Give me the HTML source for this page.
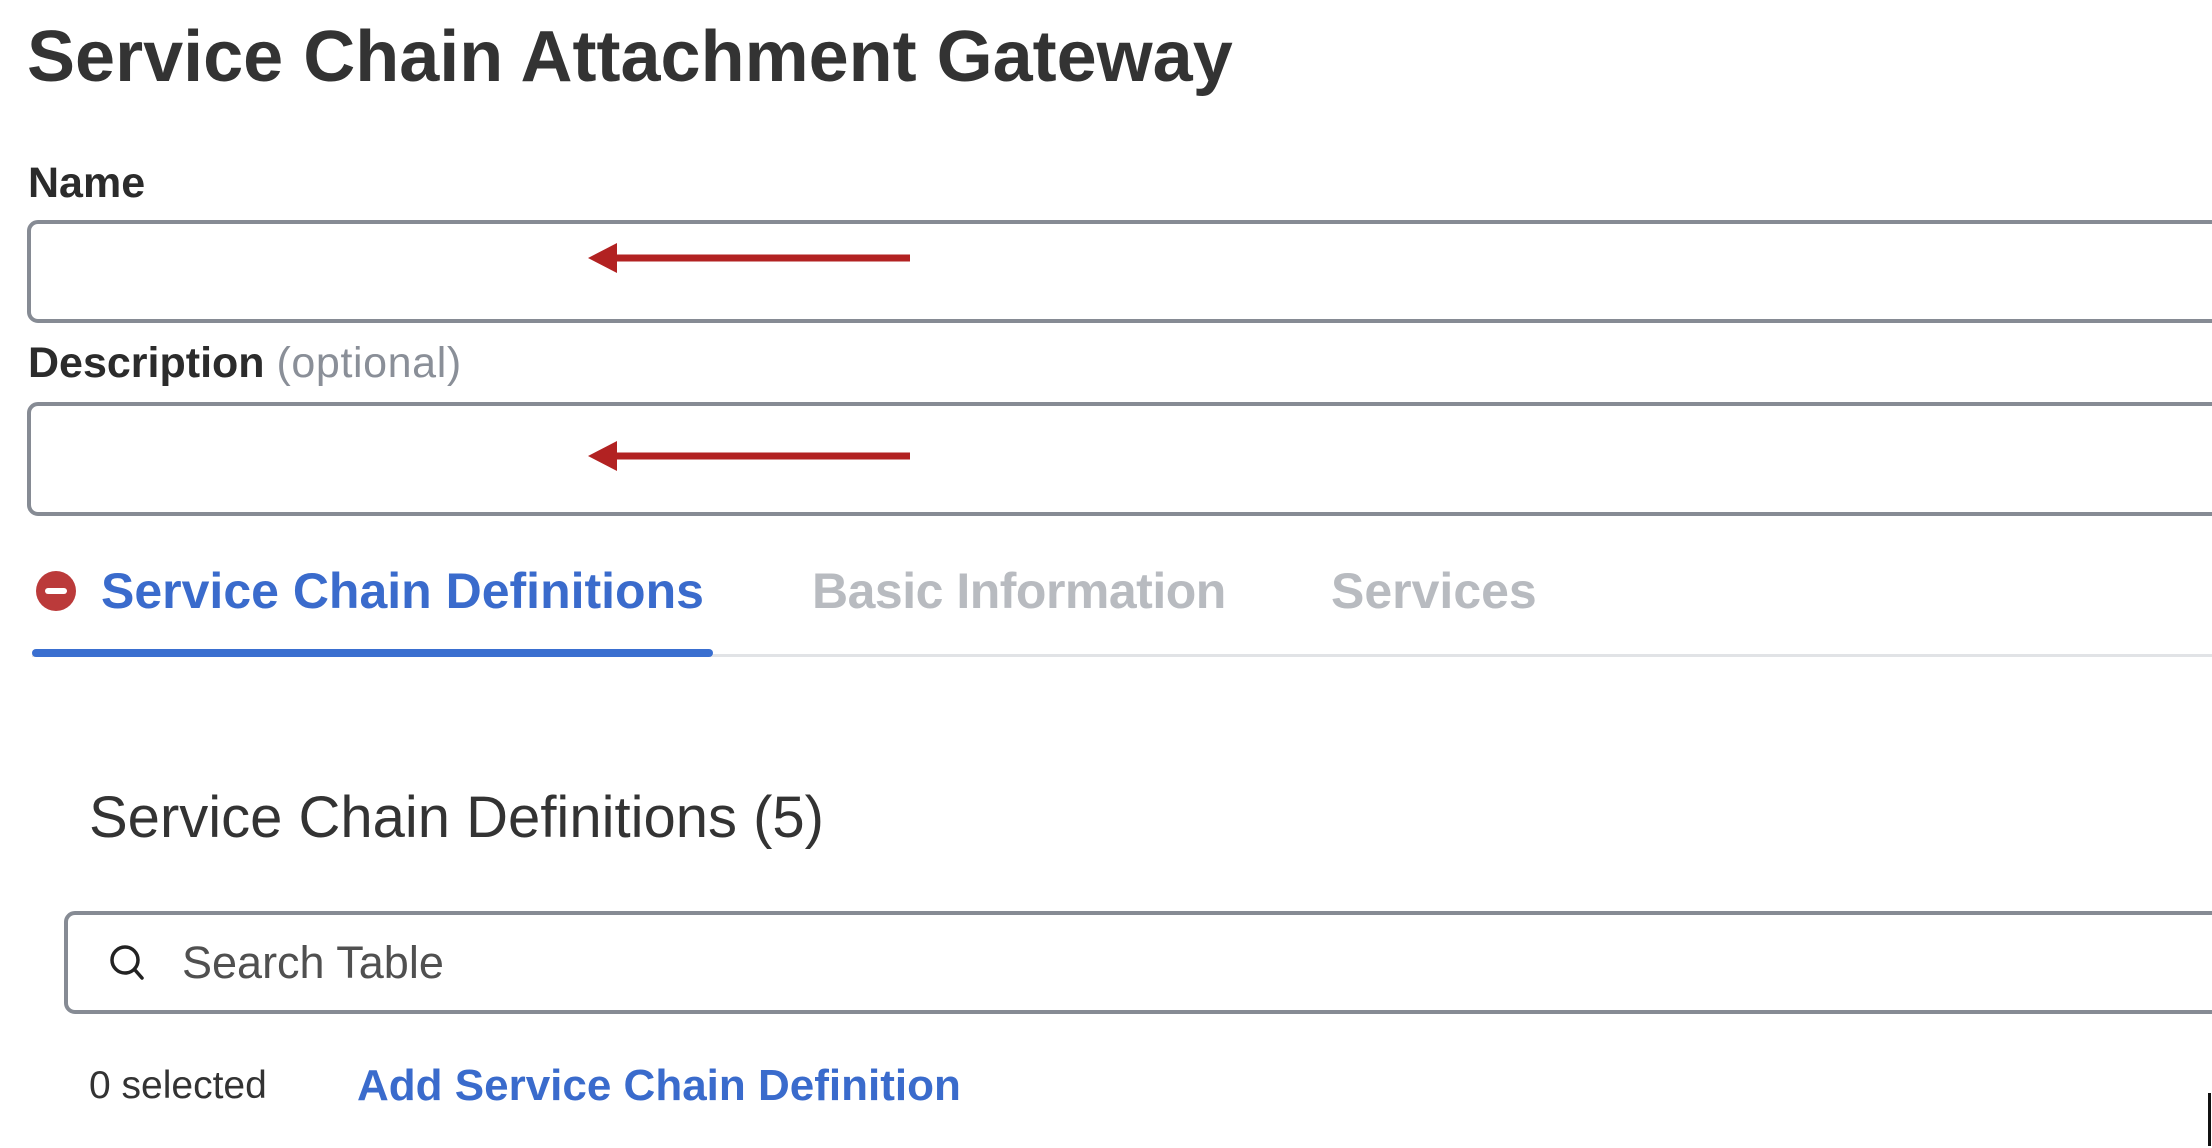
<!DOCTYPE html>
<html><head><meta charset="utf-8"><style>
html,body{margin:0;padding:0;background:#fff;width:2212px;height:1148px;overflow:hidden;position:relative;font-family:"Liberation Sans",Arial,sans-serif}
.a{position:absolute;white-space:nowrap;line-height:1}
.box{position:absolute;border:4px solid #868b94;border-radius:11px;box-sizing:border-box;background:#fff}
</style></head><body>
<div class="a" style="left:27px;top:21px;font-size:72px;font-weight:bold;color:#333">Service Chain Attachment Gateway</div>
<div class="a" style="left:28px;top:162px;font-size:43px;font-weight:bold;color:#2b2b2b">Name</div>
<div class="box" style="left:27px;top:220px;width:2220px;height:103px"></div>
<div class="a" style="left:28px;top:342px;font-size:43px;font-weight:bold;color:#2b2b2b">Description <span style="font-weight:normal;color:#8a8f98;letter-spacing:0.6px">(optional)</span></div>
<div class="box" style="left:27px;top:402px;width:2220px;height:114px"></div>
<svg class="a" style="left:585px;top:238px" width="330" height="40"><path d="M28 16.5H325v7H28z" fill="#b22222"/><path d="M3 20L32 5v30z" fill="#b22222"/></svg>
<svg class="a" style="left:585px;top:436px" width="330" height="40"><path d="M28 16.5H325v7H28z" fill="#b22222"/><path d="M3 20L32 5v30z" fill="#b22222"/></svg>
<svg class="a" style="left:36px;top:571px" width="40" height="40"><circle cx="20" cy="20" r="20" fill="#bb3a3a"/><rect x="9" y="17" width="22" height="6" rx="3" fill="#fff"/></svg>
<div class="a" style="left:101px;top:566px;font-size:50px;font-weight:bold;color:#3a6bcc">Service Chain Definitions</div>
<div class="a" style="left:812px;top:566px;font-size:50px;font-weight:bold;color:#b8bbc0;letter-spacing:-0.5px">Basic Information</div>
<div class="a" style="left:1331px;top:566px;font-size:50px;font-weight:bold;color:#b8bbc0">Services</div>
<div class="a" style="left:32px;top:654px;width:2180px;height:3px;background:#e1e3e6"></div>
<div class="a" style="left:32px;top:649px;width:681px;height:8px;border-radius:4px;background:#3a6fd0"></div>
<div class="a" style="left:89px;top:789px;font-size:58px;color:#333">Service Chain Definitions (5)</div>
<div class="box" style="left:64px;top:911px;width:2200px;height:103px"></div>
<svg class="a" style="left:108px;top:943px" width="40" height="40"><circle cx="17" cy="17" r="13" fill="none" stroke="#222" stroke-width="3.5"/><path d="M27 27L34 35" stroke="#222" stroke-width="3.5" stroke-linecap="round"/></svg>
<div class="a" style="left:182px;top:940px;font-size:45px;color:#505050">Search Table</div>
<div class="a" style="left:89px;top:1066px;font-size:39px;color:#333">0 selected</div>
<div class="a" style="left:357px;top:1064px;font-size:44px;font-weight:bold;color:#3a6bcc">Add Service Chain Definition</div>
<div class="a" style="left:2208px;top:1093px;width:3px;height:53px;background:#111"></div>
</body></html>
